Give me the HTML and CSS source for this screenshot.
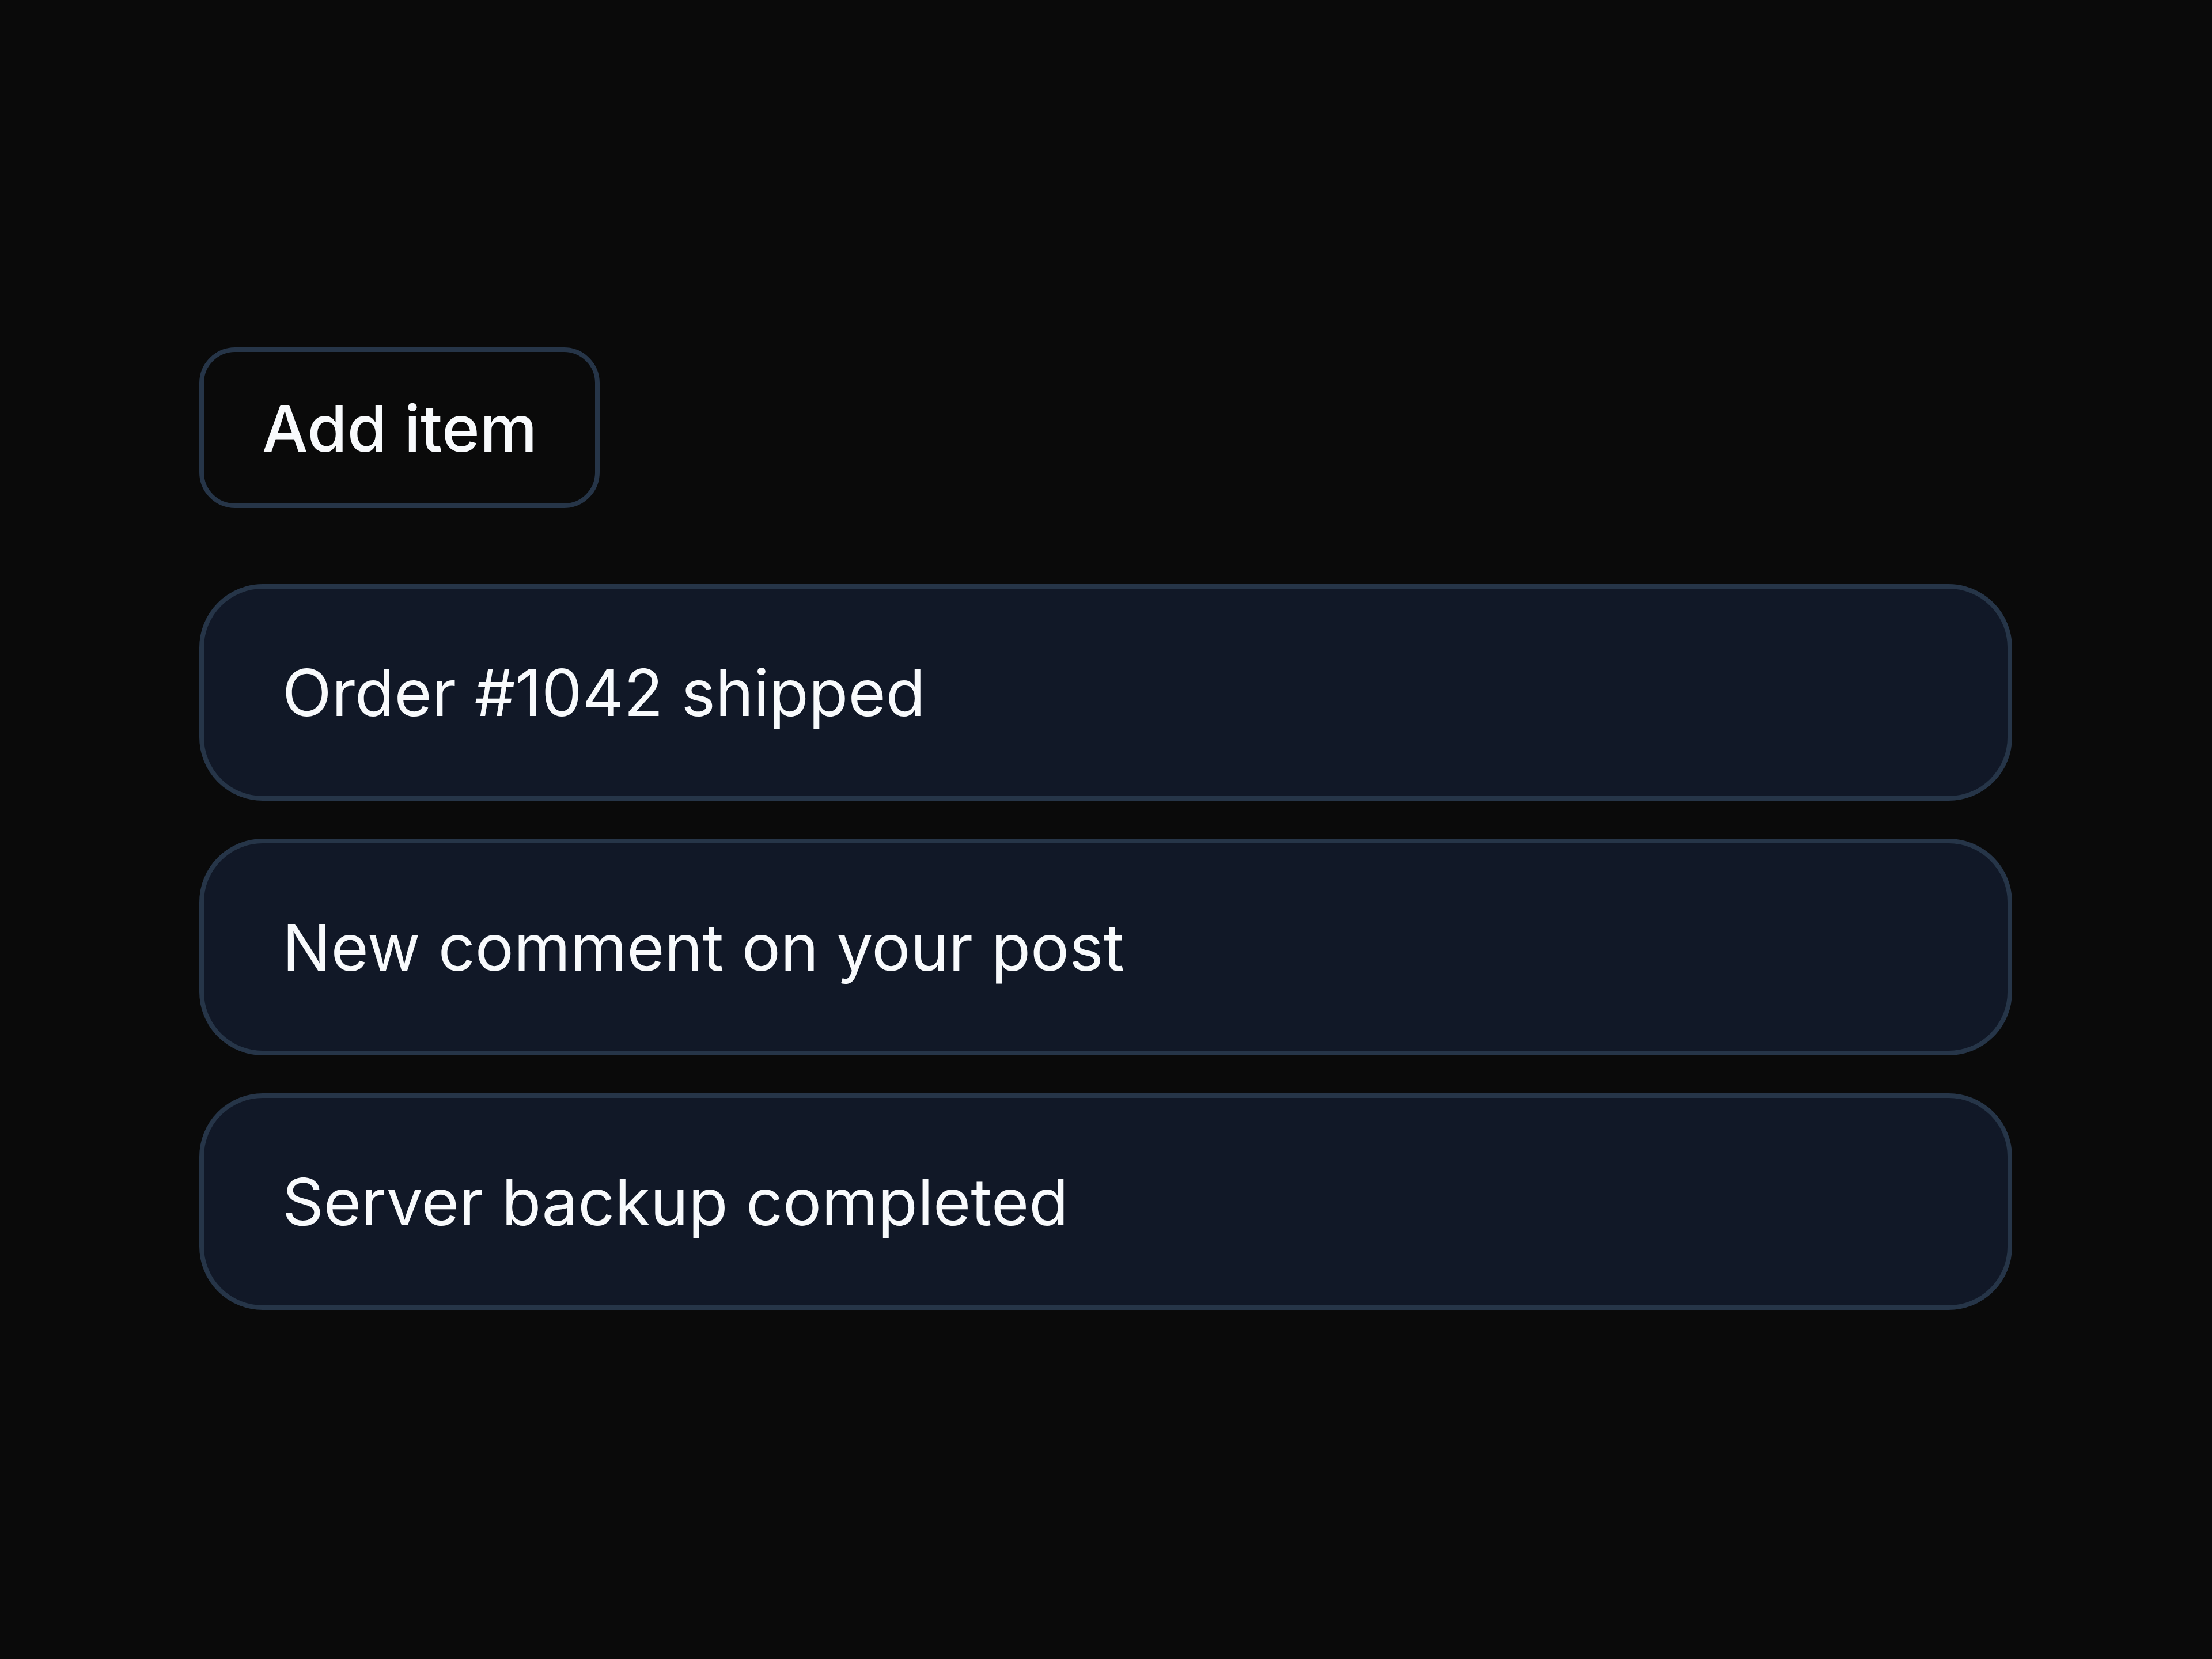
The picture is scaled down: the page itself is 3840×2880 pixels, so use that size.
FILE: index.html
```html
<!DOCTYPE html>
<html lang="en">
<head>
<meta charset="utf-8">
<title>Items</title>
<link rel="stylesheet" href="styles.css">
</head>
<body>
<main class="page">
  <button class="add-btn" type="button">Add item</button>
  <ul class="list">
    <li class="card">Order #1042 shipped</li>
    <li class="card">New comment on your post</li>
    <li class="card">Server backup completed</li>
  </ul>
</main>
</body>
</html>
```
FILE: styles.css
```css
html, body {
  margin: 0;
  padding: 0;
  background: #0a0a0a;
}
body {
  font-family: Inter, "Noto Sans", sans-serif;
  color: #f8fafc;
}
.page {
  padding: 603px 347px 0 346px;
  display: flex;
  flex-direction: column;
  align-items: flex-start;
}
.add-btn {
  box-sizing: border-box;
  height: 279px;
  padding: 0 101px;
  background: #0a0a0a;
  color: #f8fafc;
  border: 8px solid #263548;
  border-radius: 62px;
  font-family: Inter, "Noto Sans", sans-serif;
  font-size: 112px;
  font-weight: 500;
  display: flex;
  align-items: center;
}
.list {
  list-style: none;
  margin: 132px 0 0 0;
  padding: 0;
  align-self: stretch;
  display: flex;
  flex-direction: column;
  gap: 66px;
}
.card {
  box-sizing: border-box;
  height: 376px;
  padding: 0 136px;
  background: #111827;
  border: 8px solid #263548;
  border-radius: 110px;
  font-size: 112px;
  display: flex;
  align-items: center;
}
```
